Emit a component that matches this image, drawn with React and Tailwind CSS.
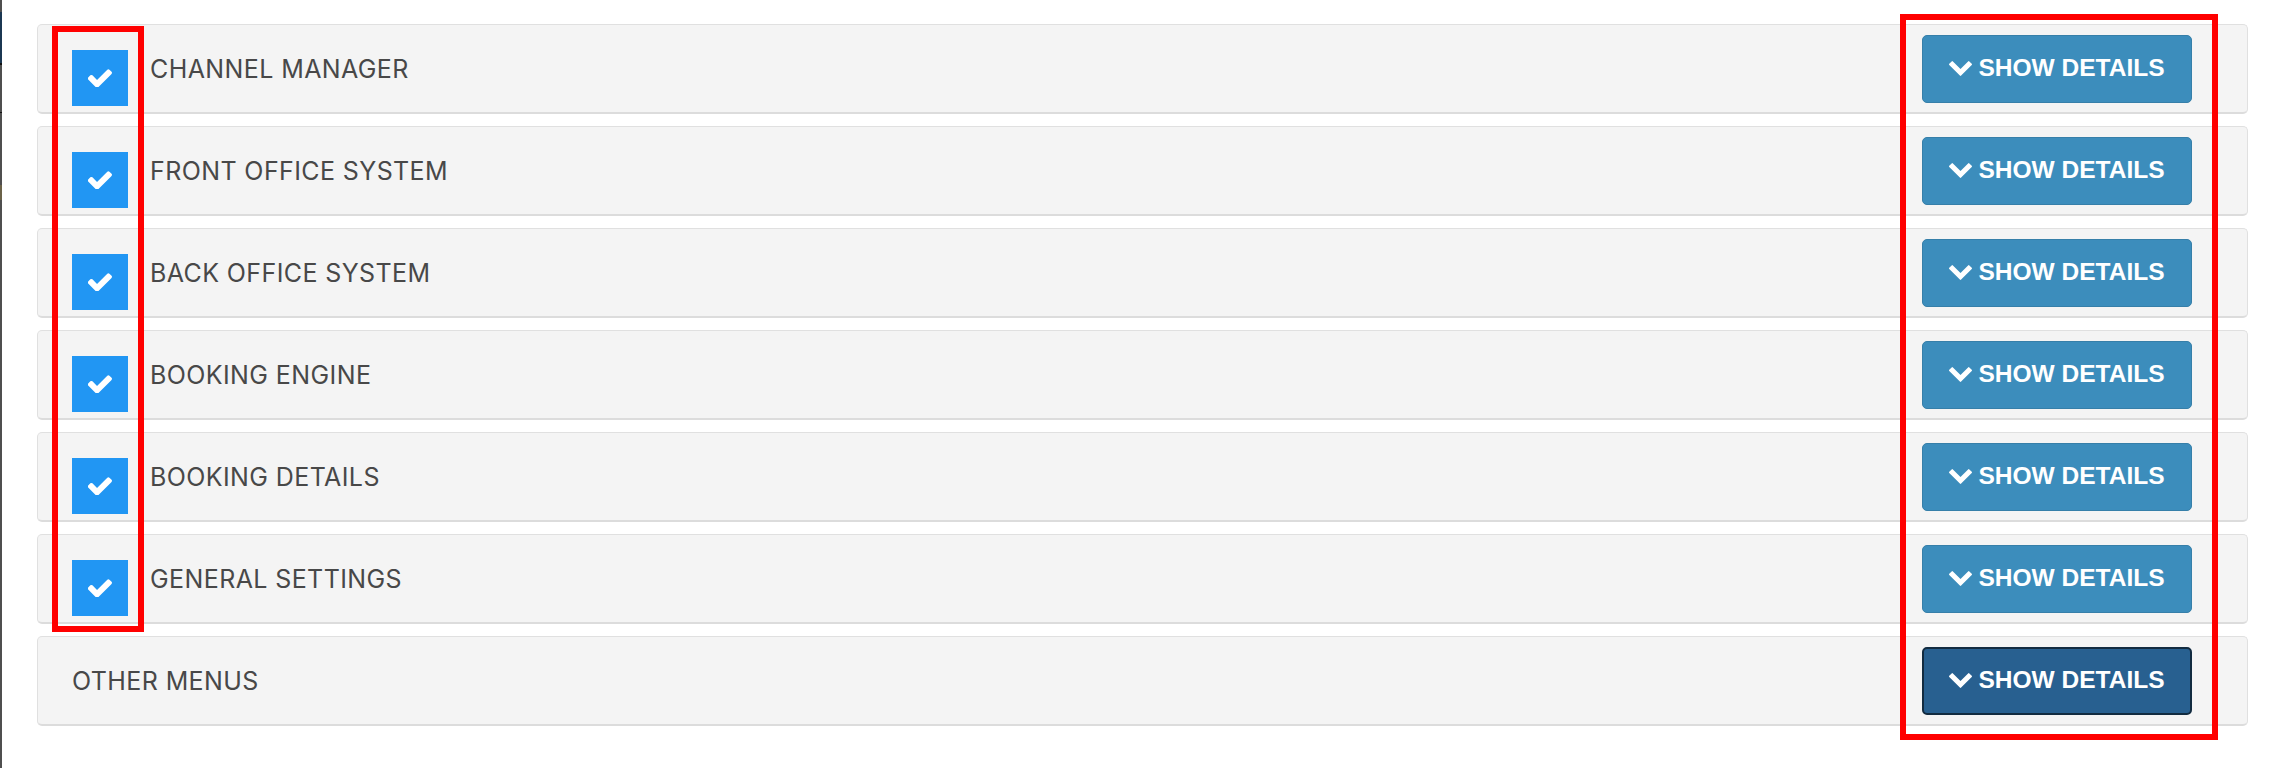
import { useState } from 'react'

const modules = [
  { name: 'CHANNEL MANAGER', checked: true },
  { name: 'FRONT OFFICE SYSTEM', checked: true },
  { name: 'BACK OFFICE SYSTEM', checked: true },
  { name: 'BOOKING ENGINE', checked: true },
  { name: 'BOOKING DETAILS', checked: true },
  { name: 'GENERAL SETTINGS', checked: true },
  { name: 'OTHER MENUS', checked: null },
]

function CheckIcon() {
  return (
    <svg width="24" height="18" viewBox="137 330 1534 1130" fill="#fff">
      <path d="M1671 566q0 40-28 68l-724 724-136 136q-28 28-68 28t-68-28l-136-136-362-362q-28-28-28-68t28-68l136-136q28-28 68-28t68 28l294 295 656-657q28-28 68-28t68 28l136 136q28 28 28 68z" />
    </svg>
  )
}

function ChevronDown() {
  return (
    <svg width="23" height="15" viewBox="90 533 1612 1035" fill="#fff">
      <path d="M1683 808l-742 741q-19 19-45 19t-45-19l-742-741q-19-19-19-45.5t19-45.5l166-165q19-19 45-19t45 19l531 531 531-531q19-19 45-19t45 19l166 165q19 19 19 45.5t-19 45.5z" />
    </svg>
  )
}

export default function App() {
  const [rows, setRows] = useState(modules)

  const toggle = (i) =>
    setRows((r) => r.map((row, j) => (j === i ? { ...row, checked: !row.checked } : row)))

  return (
    <div className="relative w-[2282px] h-[768px] bg-white overflow-hidden" style={{ fontFamily: 'Inter, "Noto Sans", sans-serif' }}>
      {/* sliver of the window behind */}
      <div className="absolute left-0 top-0 bottom-0 w-[2px] bg-[#4f4f4f]">
        <div className="absolute left-0 right-0 top-[12px] h-[51px] bg-[#1b3752]" />
        <div className="absolute left-0 right-0 top-[63px] h-[2px] bg-[#111]" />
        <div className="absolute left-0 right-0 top-[112px] h-[1px] bg-[#111]" />
        <div className="absolute left-0 right-0 top-[185px] h-[15px] bg-[#6b6248]" />
      </div>

      <div className="flex flex-col gap-[12px] pl-[37px] pr-[34px] pt-[24px]">
        {rows.map((row, i) => {
          const last = i === rows.length - 1
          return (
            <div
              key={row.name}
              className="flex items-center h-[90px] rounded-[5px] bg-[#f4f4f4] border border-[#e0e0e0] border-b-2 border-b-[#dcdcdc]"
            >
              {row.checked === null ? (
                <span className="ml-[34px] mt-[2px] text-[25px] tracking-[0.4px] text-[#484848]">{row.name}</span>
              ) : (
                <>
                  <button
                    onClick={() => toggle(i)}
                    className="ml-[34px] mt-[18px] w-[56px] h-[56px] flex items-center justify-center bg-[#2196f3]"
                  >
                    {row.checked && <CheckIcon />}
                  </button>
                  <span className="ml-[22px] mt-[2px] text-[25px] tracking-[0.4px] text-[#484848]">{row.name}</span>
                </>
              )}
              <button
                className={
                  'ml-auto mr-[55px] w-[270px] h-[68px] rounded-[5px] flex items-center justify-center gap-[6px] text-white font-bold text-[24.5px] ' +
                  (last ? 'bg-[#286090] border-2 border-[#122b40]' : 'bg-[#3c8dbc] border border-[#367fa9]')
                }
                style={{ fontFamily: '"Liberation Sans", Arial, sans-serif' }}
              >
                <ChevronDown />
                <span>SHOW DETAILS</span>
              </button>
            </div>
          )
        })}
      </div>

      {/* annotation frames */}
      <div className="absolute left-[52px] top-[26px] w-[92px] h-[606px] border-[6px] border-[#ff0000] pointer-events-none" />
      <div className="absolute left-[1900px] top-[14px] w-[318px] h-[726px] border-[6px] border-[#ff0000] pointer-events-none" />
    </div>
  )
}
